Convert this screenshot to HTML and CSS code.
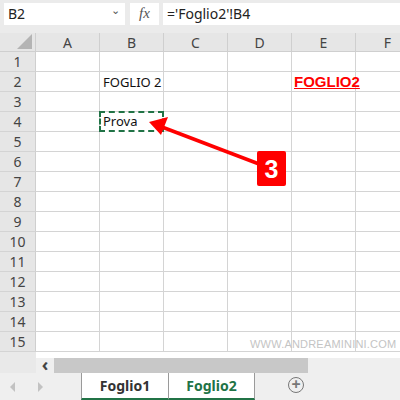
FILE: index.html
```html
<!DOCTYPE html>
<html lang="it">
<head>
<title>Foglio di lavoro</title>
<link rel="stylesheet" href="styles.css">
</head>
<body>
<div class="app">
    <div class="toolbar">
        <div class="namebox">B2<span class="chev">&#8964;</span></div>
        <div class="fxbox"><i>fx</i></div>
        <div class="formula">='Foglio2'!B4</div>
    </div>

    <div class="sheet">
        <div class="grid" id="grid"></div>

        <!-- freccia e numero sopra la griglia -->
        <svg class="overlay" width="400" height="400" viewBox="0 0 400 400">
            <line x1="259" y1="164" x2="162" y2="127" stroke="#f00" stroke-width="3.5"/>
            <polygon points="149,122 168,117 161,135" fill="#f00"/>
            <rect x="257" y="151" width="29" height="35" rx="2" fill="#f00"/>
            <text x="271.5" y="178" text-anchor="middle" class="badge">3</text>
        </svg>
        <div class="watermark">WWW.ANDREAMININI.COM</div>
    </div>

    <div class="scrollbar">
        <div class="rowfill"></div>
        <div class="track">
            <div class="sbtn">&lsaquo;</div>
            <div class="thumb"></div>
        </div>
    </div>

    <div class="tabs">
        <div class="nav"><span class="tri left"></span><span class="tri right"></span></div>
        <div class="tab">Foglio1</div>
        <div class="tab active">Foglio2</div>
        <div class="add">+</div>
    </div>
</div>

<script>
    const cols = ['A', 'B', 'C', 'D', 'E', 'F'];
    const cells = {
        'B2': { text: 'FOGLIO 2' },
        'E2': { text: 'FOGLIO2', cls: 'link' },
        'B4': { text: 'Prova', cls: 'copy' }
    };

    function buildGrid() {
        const grid = document.getElementById('grid');
        grid.innerHTML = '';
        const corner = document.createElement('div');
        corner.className = 'head cornerhead';
        grid.appendChild(corner);
        cols.forEach(c => {
            const h = document.createElement('div');
            h.className = 'head colhead';
            h.textContent = c;
            grid.appendChild(h);
        });
        for (let r = 1; r <= 15; r++) {
            const rh = document.createElement('div');
            rh.className = 'head rowhead';
            rh.textContent = r;
            grid.appendChild(rh);
            cols.forEach(c => {
                const cell = document.createElement('div');
                cell.className = 'cell';
                const data = cells[c + r];
                if (data) {
                    cell.textContent = data.text;
                    if (data.cls) cell.classList.add(data.cls);
                }
                grid.appendChild(cell);
            });
        }
    }
    buildGrid();
</script>
</body>
</html>
```

FILE: styles.css
```css
body {
    margin: 0;
    font-family: "Noto Sans", "Liberation Sans", sans-serif;
    background-color: #fff;
}

.app {
    width: 400px;
    height: 400px;
    overflow: hidden;
    display: flex;
    flex-direction: column;
}

/* barra della formula */
.toolbar {
    height: 33px;
    flex: none;
    background-color: #ebebeb;
    display: flex;
    align-items: flex-start;
    padding-top: 3px;
    padding-left: 4px;
    box-sizing: border-box;
}

.namebox {
    width: 121px;
    height: 22px;
    background-color: #fff;
    font-size: 14px;
    line-height: 22px;
    padding-left: 4px;
    box-sizing: border-box;
    color: #222;
    position: relative;
}

.chev {
    position: absolute;
    right: 5px;
    top: -4px;
    font-size: 11px;
    color: #555;
}

.fxbox {
    width: 29px;
    height: 22px;
    margin-left: 5px;
    background-color: #fff;
    text-align: center;
    line-height: 21px;
    font-family: "Liberation Serif", serif;
    font-size: 15px;
    color: #555;
}

.formula {
    flex: 1;
    height: 22px;
    margin-left: 4px;
    background-color: #fff;
    font-size: 14px;
    line-height: 22px;
    padding-left: 4px;
    color: #222;
}

/* griglia */
.sheet {
    position: relative;
    height: 319px;
    flex: none;
}

.grid {
    display: grid;
    grid-template-columns: 36px repeat(6, 64px);
    grid-template-rows: 19px repeat(15, 20px);
}

.head {
    background-color: #e6e6e6;
    color: #444;
    font-size: 14px;
    box-sizing: border-box;
    display: flex;
    align-items: center;
    justify-content: center;
}

.colhead {
    border-right: 1px solid #cfcfcf;
    border-bottom: 1px solid #cfcfcf;
}

.rowhead {
    border-right: 1px solid #cfcfcf;
    border-bottom: 1px solid #d4d4d4;
}

.cornerhead {
    border-right: 1px solid #cfcfcf;
    border-bottom: 1px solid #cfcfcf;
    position: relative;
}

.cornerhead::after {
    content: "";
    position: absolute;
    right: 3px;
    bottom: 2px;
    width: 0;
    height: 0;
    border-left: 15px solid transparent;
    border-bottom: 15px solid #b4b4b4;
}

.cell {
    border-right: 1px solid #d4d4d4;
    border-bottom: 1px solid #d4d4d4;
    box-sizing: border-box;
    font-size: 13px;
    color: #111;
    padding-left: 3px;
    line-height: 20px;
    white-space: nowrap;
}

.cell.link {
    font-family: "Liberation Sans", Arial, sans-serif;
    font-weight: bold;
    font-size: 15px;
    color: #f00;
    text-decoration: underline;
    padding-left: 2px;
    line-height: 19px;
}

.cell.copy {
    border: 2px dashed #217346;
    line-height: 16px;
    padding-left: 2px;
    margin: -1px 0 0 -1px;
}

.overlay {
    position: absolute;
    left: 0;
    top: -33px;
    pointer-events: none;
}

.badge {
    font-family: "Liberation Sans", Arial, sans-serif;
    font-weight: bold;
    font-size: 25px;
    fill: #fff;
}

.watermark {
    position: absolute;
    left: 250px;
    top: 305px;
    font-family: "Liberation Sans", Arial, sans-serif;
    font-size: 11px;
    color: #c4c4c4;
    letter-spacing: 0.2px;
}

/* barra di scorrimento */
.scrollbar {
    height: 21px;
    flex: none;
    display: flex;
    background-color: #fff;
}

.rowfill {
    width: 36px;
    background-color: #e9e9e9;
}

.track {
    flex: 1;
    margin-top: 6px;
    display: flex;
    background-color: #efefef;
}

.sbtn {
    width: 18px;
    text-align: center;
    font-size: 18px;
    line-height: 13px;
    font-weight: bold;
    color: #444;
}

.thumb {
    width: 254px;
    height: 15px;
    background-color: #c8c8c8;
}

/* schede dei fogli */
.tabs {
    height: 27px;
    flex: none;
    background-color: #efefef;
    display: flex;
    align-items: stretch;
}

.nav {
    width: 81px;
    position: relative;
}

.tri {
    position: absolute;
    top: 9px;
    width: 0;
    height: 0;
    border-top: 5px solid transparent;
    border-bottom: 5px solid transparent;
}

.tri.left {
    left: 10px;
    border-right: 5px solid #c2c2c2;
}

.tri.right {
    left: 38px;
    border-left: 5px solid #c2c2c2;
}

.tab {
    width: 87px;
    background-color: #fff;
    border-left: 1px solid #9a9a9a;
    border-bottom: 2px solid #217346;
    box-sizing: border-box;
    text-align: center;
    font-size: 14px;
    font-weight: bold;
    line-height: 25px;
    color: #333;
}

.tab.active {
    color: #217346;
    border-right: 1px solid #9a9a9a;
}

.add {
    width: 16px;
    height: 16px;
    margin: 4px 0 0 33px;
    border: 1.5px solid #777;
    border-radius: 50%;
    box-sizing: border-box;
    text-align: center;
    font-size: 16px;
    font-weight: bold;
    line-height: 12px;
    color: #777;
}
```
